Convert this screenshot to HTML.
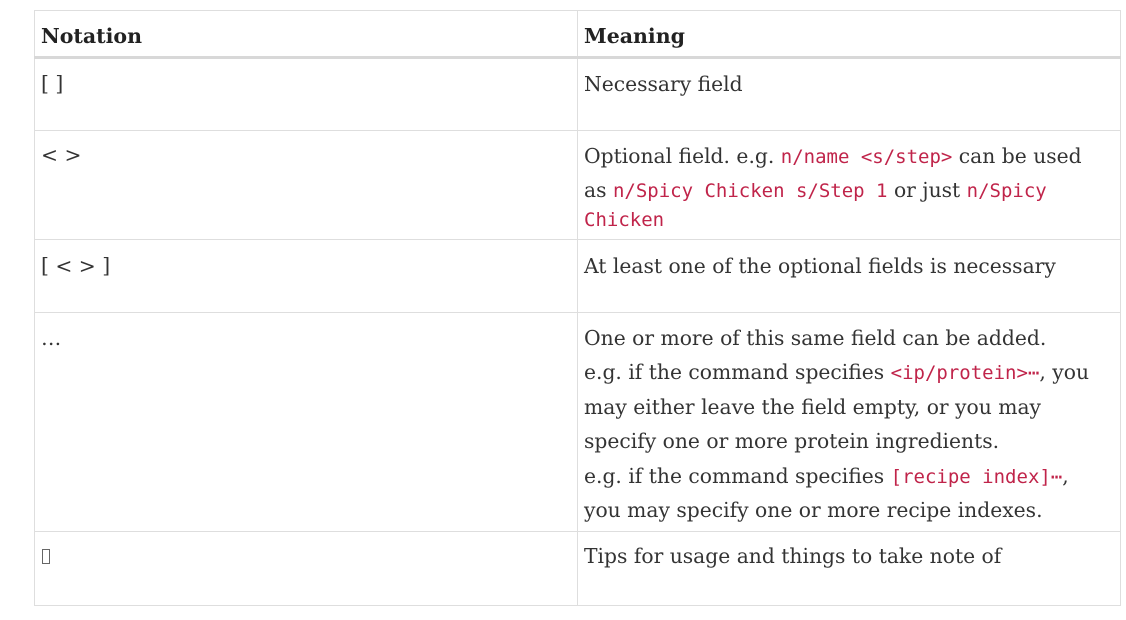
<!DOCTYPE html>
<html><head><meta charset="utf-8"><style>
body{margin:0;width:1126px;height:620px;background:#fff;position:relative;overflow:hidden;font-family:"DejaVu Serif","Liberation Serif",serif;font-size:20.3px;color:rgba(0,0,0,.8)}
.l{position:absolute;line-height:20px;white-space:nowrap}
.h{font-weight:bold;color:#222;font-size:20.5px}
code{font-family:"DejaVu Sans Mono","Liberation Mono",monospace;font-size:19px;color:#c0244a}
.b{position:absolute;background:#dedede}
</style></head><body>
<div class="b" style="left:34px;top:10px;width:1087px;height:1px"></div>
<div class="b" style="left:34px;top:605px;width:1087px;height:1px"></div>
<div class="b" style="left:34px;top:10px;width:1px;height:596px"></div>
<div class="b" style="left:1120px;top:10px;width:1px;height:596px"></div>
<div class="b" style="left:577px;top:10px;width:1px;height:596px"></div>
<div class="b" style="left:34px;top:56px;width:1087px;height:3px;background:#d8d8d8"></div>
<div class="b" style="left:34px;top:130px;width:1087px;height:1px"></div>
<div class="b" style="left:34px;top:239px;width:1087px;height:1px"></div>
<div class="b" style="left:34px;top:312px;width:1087px;height:1px"></div>
<div class="b" style="left:34px;top:531px;width:1087px;height:1px"></div>

<div class="l h" style="left:41px;top:26px">Notation</div>
<div class="l h" style="left:584px;top:26px">Meaning</div>

<div class="l" style="left:41px;top:74px">[ ]</div>
<div class="l" style="left:584px;top:74px">Necessary field</div>

<div class="l" style="left:41px;top:145px">&lt; &gt;</div>
<div class="l" style="left:584px;top:146px">Optional field. e.g. <code>n/name &lt;s/step&gt;</code> can be used</div>
<div class="l" style="left:584px;top:180px">as <code>n/Spicy Chicken s/Step 1</code> or just <code>n/Spicy</code></div>
<div class="l" style="left:584px;top:209px"><code>Chicken</code></div>

<div class="l" style="left:41px;top:256px">[ &lt; &gt; ]</div>
<div class="l" style="left:584px;top:256px">At least one of the optional fields is necessary</div>

<div class="l" style="left:41px;top:328px">…</div>
<div class="l" style="left:584px;top:328px">One or more of this same field can be added.</div>
<div class="l" style="left:584px;top:362px">e.g. if the command specifies <code>&lt;ip/protein&gt;⋯</code>, you</div>
<div class="l" style="left:584px;top:397px">may either leave the field empty, or you may</div>
<div class="l" style="left:584px;top:431px">specify one or more protein ingredients.</div>
<div class="l" style="left:584px;top:466px">e.g. if the command specifies <code>[recipe index]⋯</code>,</div>
<div class="l" style="left:584px;top:500px">you may specify one or more recipe indexes.</div>

<div style="position:absolute;left:42px;top:549px;width:6px;height:13px;border:1px solid #666"></div>
<div class="l" style="left:584px;top:546px">Tips for usage and things to take note of</div>
</body></html>
